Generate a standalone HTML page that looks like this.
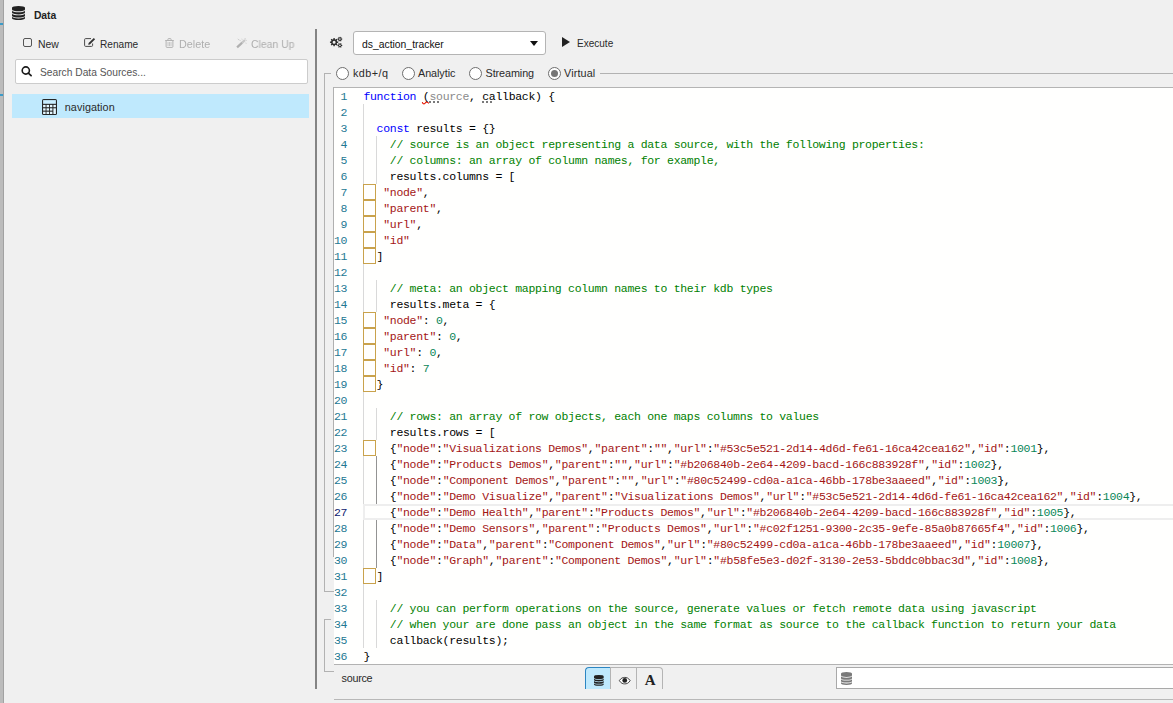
<!DOCTYPE html>
<html><head><meta charset="utf-8"><title>Data</title>
<style>
*{box-sizing:border-box;margin:0;padding:0}
html,body{width:1173px;height:703px;overflow:hidden;background:#f0f0f0}
body{position:relative;font-family:"Liberation Sans",sans-serif;font-size:10.8px;color:#2a2a2a}
.abs{position:absolute}
.t{position:absolute;white-space:nowrap;line-height:16px;height:16px}
.dis{color:#4a4a4a;opacity:.4;will-change:transform}
#strip{left:0;top:0;width:3px;height:703px;background:#bcbcbc}
#strip2{left:3px;top:0;width:1px;height:703px;background:#a2a2a2}
.tick{left:0;width:3px;height:2px;background:#3c9bc8}
#search{left:15px;top:59px;width:293px;height:25px;background:#fff;border:1px solid #ccc;border-radius:2px}
#sel{left:12px;top:94px;width:297px;height:24px;background:#bfe9fd}
#divider{left:315px;top:29px;width:2px;height:660px;background:#848484}
#dd{left:353px;top:31px;width:193px;height:24px;background:#fff;border:1px solid #b4b4b4;border-radius:3px}
#fs1{left:324px;top:73px;width:860px;height:519px;border:1px solid #b2b2b2;border-right:0}
#fs2{left:324px;top:619px;width:10px;height:53px;border:1px solid #b2b2b2;border-right:0}
.legbg{background:#f0f0f0}
.radio{width:13px;height:13px;border-radius:50%;border:1px solid #6e6e6e;background:#fff}
#editor{left:334px;top:88px;width:850px;height:576px;background:#fffffe}
#edt{left:333px;top:87px;width:850px;height:1px;background:#b4b4b4}
#edl{left:333px;top:87px;width:1px;height:470px;background:#b0b0b0}
#edb{left:334px;top:664px;width:850px;height:1px;background:#b2b2b2}
#nums{left:333.7px;top:89px;width:13.5px;font-family:"Liberation Mono",monospace;font-size:11.5px;letter-spacing:-0.3px;color:#237893;text-align:right}
#nums .ln{height:16px;line-height:16px;white-space:nowrap}
#nums .cur{color:#0b216f}
#code{left:363.4px;top:89px;font-family:"Liberation Mono",monospace;font-size:11.5px;letter-spacing:-0.3px;color:#000}
#code .cl{height:16px;line-height:16px;white-space:pre}
.k{color:#0000ff}.c{color:#008000}.s{color:#a31515}.n{color:#098658}.u{color:#8a8a8a}
.bx{display:inline-block;width:13.2px;height:16px;vertical-align:top;position:relative}
.bx:after{content:"";box-sizing:border-box;position:absolute;left:-0.4px;top:-1px;width:13px;height:16px;border:1px solid #c9a24c}
.g{background:#d9d9d9;width:1px}
.dots{height:2px;width:10px;background:repeating-linear-gradient(to right,#7a7a7a 0,#7a7a7a 2px,transparent 2px,transparent 4px)}
#curline{left:363px;top:504px;width:830px;height:16px;border:2px solid #eeeeee;background:#fffffe}
.tab{top:667px;height:22px;border:1px solid #b4b4b4;border-bottom:0}
#tab1{left:585px;width:26px;background:#bfe9fd;border-color:#2c86c2 #b4b4b4 #2c86c2 #2c86c2;border-radius:4px 0 0 0}
#tab2{left:610px;width:27px;border-left:0}
#tab3{left:636px;width:27px;border-radius:0 4px 0 0}
#inp{left:836px;top:667px;width:345px;height:22px;background:#fff;border:1px solid #a9a9a9}
#bline{left:334px;top:699px;width:845px;height:1px;background:#b8b8b8}
svg{position:absolute;overflow:visible}
</style></head><body>
<div class="abs" id="strip"></div><div class="abs" id="strip2"></div>
<div class="abs tick" style="top:23px"></div><div class="abs tick" style="top:94px"></div>

<!-- header -->
<svg id="ic-db" style="left:12px;top:6px" width="13" height="14" preserveAspectRatio="none" viewBox="0 0 12 14"><g fill="#222"><path d="M0 1.800A6 1.800 0 0 1 12 1.800V3.500A6 1.800 0 0 1 0 3.500ZM0 4.4A6 1.800 0 0 0 12 4.4V6.6A6 1.800 0 0 1 0 6.6ZM0 7.5A6 1.800 0 0 0 12 7.5V9.7A6 1.800 0 0 1 0 9.7ZM0 10.6A6 1.800 0 0 0 12 10.6V12.2A6 1.800 0 0 1 0 12.2Z"/></g></svg>
<div class="t" id="t-data" style="left:34px;top:7px;font-weight:bold;font-size:11px;color:#222;letter-spacing:-0.1px;transform:scaleX(.94);transform-origin:0 0">Data</div>

<!-- toolbar -->
<div class="abs" style="left:23px;top:38px;width:9px;height:9px;border:1px solid #555;border-radius:2px"></div>
<div class="t" id="t-new" style="left:38px;top:36px;transform:scaleX(0.965);transform-origin:0 0">New</div>
<svg id="ic-edit" style="left:84px;top:38px" width="12" height="9" viewBox="0 0 12 9"><path d="M7 .600H1.600a1 1 0 0 0-1 1v5.800a1 1 0 0 0 1 1h6a1 1 0 0 0 1-1V5.500" fill="none" stroke="#4a4a4a" stroke-width="1"/><path d="M4.200 6.800l.4-1.700L9.800 0l1.300 1.300-5.200 5.100z" fill="#333"/></svg>
<div class="t" id="t-rename" style="left:100px;top:36px;transform:scaleX(0.937);transform-origin:0 0">Rename</div>
<svg id="ic-trash" style="left:164.500px;top:38px" width="9" height="10" viewBox="0 0 9 10"><path d="M.2 2.500H8.800M2.900 2.400V1.300a.7.700 0 0 1 .7-.7h1.800a.7.700 0 0 1 .7.700V2.400M1.100 2.800V8.500a.9.900 0 0 0 .9.900h5a.9.900 0 0 0 .9-.9V2.800" fill="none" stroke="#b2b2b2" stroke-width="1"/><path d="M3 4v4M4.500 4v4M6 4v4" fill="none" stroke="#bcbcbc" stroke-width=".8"/></svg>
<div class="t dis" id="t-delete" style="left:179px;top:36px;letter-spacing:0px">Delete</div>
<svg id="ic-wand" style="left:236px;top:37.500px" width="11" height="11" viewBox="0 0 11 11"><path d="M1.100 9.300L6.200 4.600" stroke="#b0b0b0" stroke-width="2.300" fill="none"/><path d="M6.200 4.600L9 2" stroke="#c6c6c6" stroke-width="2.300" fill="none"/><path d="M1.800 1l1 .8M3.500 2.200l1 .4M5.800.8l.3.700M8.700.6l1 .3M10 1.800l.5.700M9.600 5l.8.300" stroke="#bdbdbd" stroke-width=".9" fill="none"/></svg>
<div class="t dis" id="t-clean" style="left:250.7px;top:36px;transform:scaleX(0.965);transform-origin:0 0">Clean Up</div>

<!-- search -->
<div class="abs" id="search"></div>
<svg id="ic-search" style="left:21px;top:66px" width="11" height="11" viewBox="0 0 11 11"><circle cx="4.800" cy="4.500" r="3.600" fill="none" stroke="#1a1a1a" stroke-width="1.600"/><path d="M7.400 7.200L10.100 9.700" stroke="#1a1a1a" stroke-width="1.700" stroke-linecap="round"/></svg>
<div class="t" id="t-search" style="left:39.7px;top:64px;color:#555;transform:scaleX(0.948);transform-origin:0 0">Search Data Sources...</div>

<!-- selected row -->
<div class="abs" id="sel"></div>
<svg id="ic-calc" style="left:42px;top:99px" width="15" height="16" viewBox="0 0 15 16"><rect x="0" y="0" width="15" height="16" rx="1.600" fill="#262626"/><rect x="1.100" y="1.100" width="12.800" height="3.700" fill="#c9eeff"/><g fill="#e4f7ff"><rect x="1.1" y="5.9" width="2.500" height="2.3"/><rect x="1.1" y="9.3" width="2.500" height="2.3"/><rect x="1.1" y="12.7" width="2.500" height="2.3"/><rect x="4.5" y="5.9" width="2.500" height="2.3"/><rect x="4.5" y="9.3" width="2.500" height="2.3"/><rect x="4.5" y="12.7" width="2.500" height="2.3"/><rect x="7.9" y="5.9" width="2.500" height="2.3"/><rect x="7.9" y="9.3" width="2.500" height="2.3"/><rect x="7.9" y="12.7" width="2.500" height="2.3"/><rect x="11.4" y="5.9" width="2.500" height="2.3"/><rect x="11.4" y="9.3" width="2.500" height="5.7"/></g></svg>
<div class="t" id="t-nav" style="left:64.8px;top:99px;letter-spacing:0.07px">navigation</div>

<div class="abs" id="divider"></div>

<!-- top right controls -->
<svg id="ic-cogs" style="left:329.600px;top:35.800px" width="13" height="12" viewBox="0 0 13 12"><path fill-rule="evenodd" fill="#2a2a2a" d="M7.11 5.48L8.25 5.54L8.25 6.86L7.11 6.92L6.74 7.82L7.50 8.67L6.57 9.60L5.72 8.84L4.82 9.21L4.76 10.35L3.44 10.35L3.38 9.21L2.48 8.84L1.63 9.60L0.70 8.67L1.46 7.82L1.09 6.92L-0.05 6.86L-0.05 5.54L1.09 5.48L1.46 4.58L0.70 3.73L1.63 2.80L2.48 3.56L3.38 3.19L3.44 2.05L4.76 2.05L4.82 3.19L5.72 3.56L6.57 2.80L7.50 3.73L6.74 4.58ZM2.60 6.20a1.50 1.50 0 1 0 3.00 0a1.50 1.50 0 1 0 -3.00 0ZM11.52 2.57L12.25 2.60L12.25 3.60L11.52 3.63L11.16 4.24L11.51 4.88L10.64 5.38L10.25 4.76L9.55 4.76L9.16 5.38L8.29 4.88L8.64 4.24L8.28 3.63L7.55 3.60L7.55 2.60L8.28 2.57L8.64 1.96L8.29 1.32L9.16 0.82L9.55 1.44L10.25 1.44L10.64 0.82L11.51 1.32L11.16 1.96ZM9.10 3.10a0.80 0.80 0 1 0 1.60 0a0.80 0.80 0 1 0 -1.60 0ZM11.52 8.87L12.25 8.90L12.25 9.90L11.52 9.93L11.16 10.54L11.51 11.18L10.64 11.68L10.25 11.06L9.55 11.06L9.16 11.68L8.29 11.18L8.64 10.54L8.28 9.93L7.55 9.90L7.55 8.90L8.28 8.87L8.64 8.26L8.29 7.62L9.16 7.12L9.55 7.74L10.25 7.74L10.64 7.12L11.51 7.62L11.16 8.26ZM9.10 9.40a0.80 0.80 0 1 0 1.60 0a0.80 0.80 0 1 0 -1.60 0Z"/></svg>
<div class="abs" id="dd"></div>
<div class="t" id="t-dd" style="left:362px;top:36px;color:#111;transform:scaleX(0.96);transform-origin:0 0">ds_action_tracker</div>
<svg style="left:530px;top:41px" width="8" height="5" viewBox="0 0 9 6" preserveAspectRatio="none"><path d="M0 0h9L4.500 6z" fill="#111"/></svg>
<svg style="left:562px;top:37px" width="8" height="10" viewBox="0 0 8 10"><path d="M0 0l8 5-8 5z" fill="#222"/></svg>
<div class="t" id="t-exec" style="left:576.5px;top:35px;transform:scaleX(0.928);transform-origin:0 0">Execute</div>

<!-- fieldsets -->
<div class="abs" id="fs1"></div>
<div class="abs" id="fs2"></div>
<div class="abs legbg" style="left:331px;top:70px;width:269px;height:8px"></div>
<div class="abs legbg" style="left:331px;top:616px;width:20px;height:8px"></div>
<div class="abs radio" style="left:336px;top:67px"></div>
<div class="t" id="t-r1" style="left:353px;top:65px;letter-spacing:0.45px">kdb+/q</div>
<div class="abs radio" style="left:402px;top:67px"></div>
<div class="t" id="t-r2" style="left:418px;top:65px;letter-spacing:-0.06px">Analytic</div>
<div class="abs radio" style="left:469px;top:67px"></div>
<div class="t" id="t-r3" style="left:485.6px;top:65px;letter-spacing:-0.09px">Streaming</div>
<div class="abs radio" style="left:548px;top:67px"></div>
<div class="abs" style="left:551px;top:70px;width:7px;height:7px;border-radius:50%;background:#767676"></div>
<div class="t" id="t-r4" style="left:564px;top:65px;letter-spacing:0.13px">Virtual</div>

<!-- editor -->
<div class="abs" id="editor"></div><div class="abs" id="edt"></div><div class="abs" id="edl"></div><div class="abs" id="edb"></div>
<div class="abs" style="left:1077px;top:504px;width:2px;height:2px;background:#9a9a9a;border-radius:1px"></div>
<div class="abs g" style="left:363px;top:104px;height:544px"></div>
<div class="abs g" style="left:376px;top:136px;height:48px"></div>
<div class="abs g" style="left:376px;top:280px;height:32px"></div>
<div class="abs g" style="left:376px;top:408px;height:32px"></div>
<div class="abs g" style="left:376px;top:456px;height:112px;background:#939393"></div>
<div class="abs g" style="left:376px;top:600px;height:48px"></div>
<div class="abs" id="curline"></div>
<div class="abs dots" style="left:429px;top:101px"></div>
<div class="abs dots" style="left:482px;top:101px"></div>
<svg style="left:422px;top:100.500px" width="8" height="4" viewBox="0 0 8 4"><path d="M.3 1.200C.6 2.400 1.500 3.200 2.400 2.800S4 1 4.600 .9S6 1.800 6.900 2.400" fill="none" stroke="#e51400" stroke-width="1.100"/></svg>
<div class="abs" id="nums">
<div class="ln">1</div>
<div class="ln">2</div>
<div class="ln">3</div>
<div class="ln">4</div>
<div class="ln">5</div>
<div class="ln">6</div>
<div class="ln">7</div>
<div class="ln">8</div>
<div class="ln">9</div>
<div class="ln">10</div>
<div class="ln">11</div>
<div class="ln">12</div>
<div class="ln">13</div>
<div class="ln">14</div>
<div class="ln">15</div>
<div class="ln">16</div>
<div class="ln">17</div>
<div class="ln">18</div>
<div class="ln">19</div>
<div class="ln">20</div>
<div class="ln">21</div>
<div class="ln">22</div>
<div class="ln">23</div>
<div class="ln">24</div>
<div class="ln">25</div>
<div class="ln">26</div>
<div class="ln cur">27</div>
<div class="ln">28</div>
<div class="ln">29</div>
<div class="ln">30</div>
<div class="ln">31</div>
<div class="ln">32</div>
<div class="ln">33</div>
<div class="ln">34</div>
<div class="ln">35</div>
<div class="ln">36</div>
</div>
<div class="abs" id="code">
<div class="cl"><span class="k">function</span> <span class="sq">(</span><span class="u"><span class="dt">so</span>urce</span>, <span class="dt">ca</span>llback) {</div>
<div class="cl"></div>
<div class="cl">  <span class="k">const</span> results = {}</div>
<div class="cl">    <span class="c">// source is an object representing a data source, with the following properties:</span></div>
<div class="cl">    <span class="c">// columns: an array of column names, for example,</span></div>
<div class="cl">    results.columns = [</div>
<div class="cl"><span class="bx"></span> <span class="s">&quot;node&quot;</span>,</div>
<div class="cl"><span class="bx"></span> <span class="s">&quot;parent&quot;</span>,</div>
<div class="cl"><span class="bx"></span> <span class="s">&quot;url&quot;</span>,</div>
<div class="cl"><span class="bx"></span> <span class="s">&quot;id&quot;</span></div>
<div class="cl"><span class="bx"></span>]</div>
<div class="cl"></div>
<div class="cl">    <span class="c">// meta: an object mapping column names to their kdb types</span></div>
<div class="cl">    results.meta = {</div>
<div class="cl"><span class="bx"></span> <span class="s">&quot;node&quot;</span>: <span class="n">0</span>,</div>
<div class="cl"><span class="bx"></span> <span class="s">&quot;parent&quot;</span>: <span class="n">0</span>,</div>
<div class="cl"><span class="bx"></span> <span class="s">&quot;url&quot;</span>: <span class="n">0</span>,</div>
<div class="cl"><span class="bx"></span> <span class="s">&quot;id&quot;</span>: <span class="n">7</span></div>
<div class="cl"><span class="bx"></span>}</div>
<div class="cl"></div>
<div class="cl">    <span class="c">// rows: an array of row objects, each one maps columns to values</span></div>
<div class="cl">    results.rows = [</div>
<div class="cl"><span class="bx"></span>  {<span class="s">&quot;node&quot;</span>:<span class="s">&quot;Visualizations Demos&quot;</span>,<span class="s">&quot;parent&quot;</span>:<span class="s">&quot;&quot;</span>,<span class="s">&quot;url&quot;</span>:<span class="s">&quot;#53c5e521-2d14-4d6d-fe61-16ca42cea162&quot;</span>,<span class="s">&quot;id&quot;</span>:<span class="n">1001</span>},</div>
<div class="cl">    {<span class="s">&quot;node&quot;</span>:<span class="s">&quot;Products Demos&quot;</span>,<span class="s">&quot;parent&quot;</span>:<span class="s">&quot;&quot;</span>,<span class="s">&quot;url&quot;</span>:<span class="s">&quot;#b206840b-2e64-4209-bacd-166c883928f&quot;</span>,<span class="s">&quot;id&quot;</span>:<span class="n">1002</span>},</div>
<div class="cl">    {<span class="s">&quot;node&quot;</span>:<span class="s">&quot;Component Demos&quot;</span>,<span class="s">&quot;parent&quot;</span>:<span class="s">&quot;&quot;</span>,<span class="s">&quot;url&quot;</span>:<span class="s">&quot;#80c52499-cd0a-a1ca-46bb-178be3aaeed&quot;</span>,<span class="s">&quot;id&quot;</span>:<span class="n">1003</span>},</div>
<div class="cl">    {<span class="s">&quot;node&quot;</span>:<span class="s">&quot;Demo Visualize&quot;</span>,<span class="s">&quot;parent&quot;</span>:<span class="s">&quot;Visualizations Demos&quot;</span>,<span class="s">&quot;url&quot;</span>:<span class="s">&quot;#53c5e521-2d14-4d6d-fe61-16ca42cea162&quot;</span>,<span class="s">&quot;id&quot;</span>:<span class="n">1004</span>},</div>
<div class="cl">    {<span class="s">&quot;node&quot;</span>:<span class="s">&quot;Demo Health&quot;</span>,<span class="s">&quot;parent&quot;</span>:<span class="s">&quot;Products Demos&quot;</span>,<span class="s">&quot;url&quot;</span>:<span class="s">&quot;#b206840b-2e64-4209-bacd-166c883928f&quot;</span>,<span class="s">&quot;id&quot;</span>:<span class="n">1005</span>},</div>
<div class="cl">    {<span class="s">&quot;node&quot;</span>:<span class="s">&quot;Demo Sensors&quot;</span>,<span class="s">&quot;parent&quot;</span>:<span class="s">&quot;Products Demos&quot;</span>,<span class="s">&quot;url&quot;</span>:<span class="s">&quot;#c02f1251-9300-2c35-9efe-85a0b87665f4&quot;</span>,<span class="s">&quot;id&quot;</span>:<span class="n">1006</span>},</div>
<div class="cl">    {<span class="s">&quot;node&quot;</span>:<span class="s">&quot;Data&quot;</span>,<span class="s">&quot;parent&quot;</span>:<span class="s">&quot;Component Demos&quot;</span>,<span class="s">&quot;url&quot;</span>:<span class="s">&quot;#80c52499-cd0a-a1ca-46bb-178be3aaeed&quot;</span>,<span class="s">&quot;id&quot;</span>:<span class="n">10007</span>},</div>
<div class="cl">    {<span class="s">&quot;node&quot;</span>:<span class="s">&quot;Graph&quot;</span>,<span class="s">&quot;parent&quot;</span>:<span class="s">&quot;Component Demos&quot;</span>,<span class="s">&quot;url&quot;</span>:<span class="s">&quot;#b58fe5e3-d02f-3130-2e53-5bddc0bbac3d&quot;</span>,<span class="s">&quot;id&quot;</span>:<span class="n">1008</span>},</div>
<div class="cl"><span class="bx"></span>]</div>
<div class="cl"></div>
<div class="cl">    <span class="c">// you can perform operations on the source, generate values or fetch remote data using javascript</span></div>
<div class="cl">    <span class="c">// when your are done pass an object in the same format as source to the callback function to return your data</span></div>
<div class="cl">    callback(results);</div>
<div class="cl">}</div>
</div>

<!-- bottom -->
<div class="t" id="t-source" style="left:341.5px;top:670px;letter-spacing:-0.26px">source</div>
<div class="abs tab" id="tab1"></div>
<div class="abs tab" id="tab2"></div>
<div class="abs tab" id="tab3"></div>
<svg style="left:593.800px;top:674.600px" width="9.700" height="10.800" viewBox="0 0 12 14" preserveAspectRatio="none"><g fill="#222"><path d="M0 1.800A6 1.800 0 0 1 12 1.800V3.500A6 1.800 0 0 1 0 3.500ZM0 4.4A6 1.800 0 0 0 12 4.4V6.6A6 1.800 0 0 1 0 6.6ZM0 7.5A6 1.800 0 0 0 12 7.5V9.7A6 1.800 0 0 1 0 9.7ZM0 10.6A6 1.800 0 0 0 12 10.6V12.2A6 1.800 0 0 1 0 12.2Z"/></g></svg>
<svg style="left:619px;top:676.800px" width="11.500" height="7.300" viewBox="0 0 11 7"><path d="M.3 3.500C2 .8 3.800.4 5.500.4S9 .8 10.700 3.500C9 6.200 7.200 6.600 5.500 6.600S2 6.200.3 3.500z" fill="#fff" stroke="#222" stroke-width=".8"/><circle cx="5.500" cy="3.300" r="2.300" fill="#222"/></svg>
<div class="t" style="left:644.800px;top:671.600px;font-family:'Liberation Serif',serif;font-weight:bold;font-size:15px;color:#222">A</div>
<div class="abs" id="inp"></div>
<svg style="left:841px;top:672px" width="11" height="13" viewBox="0 0 12 14"><g fill="#7a7a7a"><path d="M0 1.800A6 1.800 0 0 1 12 1.800V3.500A6 1.800 0 0 1 0 3.500ZM0 4.4A6 1.800 0 0 0 12 4.4V6.6A6 1.800 0 0 1 0 6.6ZM0 7.5A6 1.800 0 0 0 12 7.5V9.7A6 1.800 0 0 1 0 9.7ZM0 10.6A6 1.800 0 0 0 12 10.6V12.2A6 1.800 0 0 1 0 12.2Z"/></g></svg>
<div class="abs" id="bline"></div>
</body></html>
